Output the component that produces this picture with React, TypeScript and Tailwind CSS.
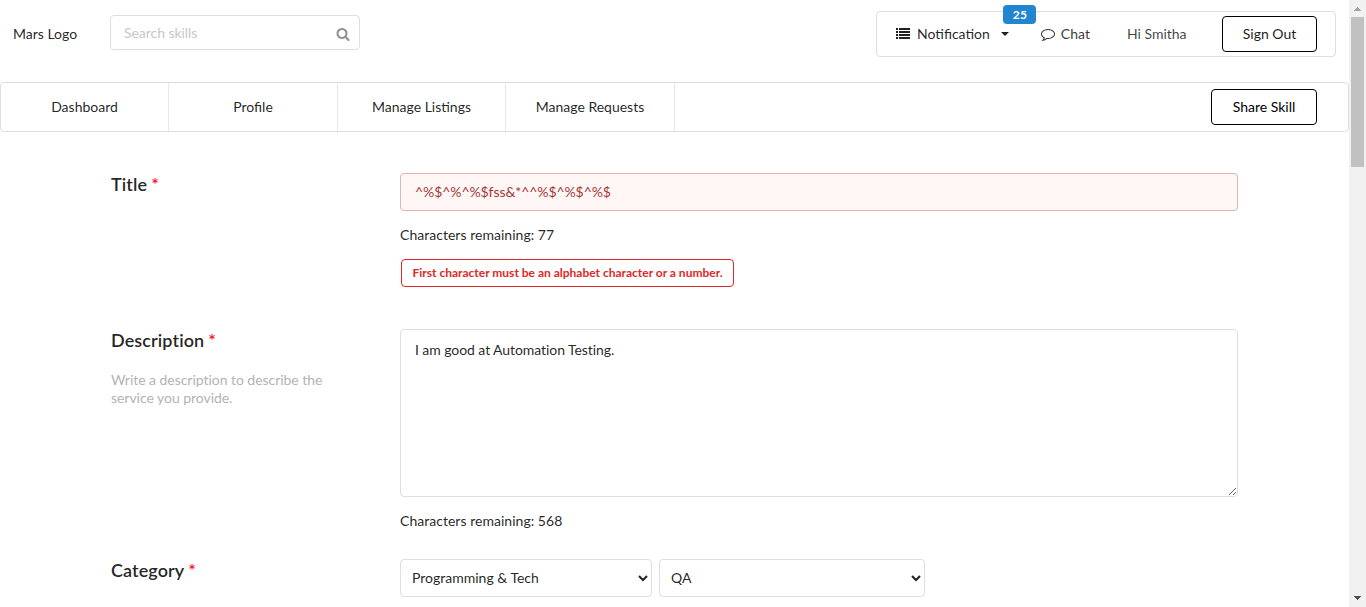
import React from 'react';

const NAV = ['Dashboard', 'Profile', 'Manage Listings', 'Manage Requests'];

function SearchIcon() {
  return (
    <svg viewBox="0 0 1792 1792" className="h-3.5 w-3.5" fill="currentColor">
      <path d="M1216 832q0-185-131.5-316.5t-316.5-131.5-316.5 131.5-131.5 316.5 131.5 316.5 316.5 131.5 316.5-131.5 131.5-316.5zm512 832q0 52-38 90t-90 38q-54 0-90-38l-343-342q-179 124-399 124-143 0-273.5-55.5t-225-150-150-225-55.5-273.5 55.5-273.5 150-225 225-150 273.5-55.5 273.5 55.5 225 150 150 225 55.5 273.5q0 220-124 399l343 343q37 37 37 90z" />
    </svg>
  );
}

function ListIcon() {
  return (
    <svg viewBox="0 0 14 11" className="h-[11px] w-3.5" fill="currentColor" shapeRendering="crispEdges">
      {[0, 3, 6, 9].map((y) => (
        <g key={y}>
          <rect x="0" y={y} width="2" height="2" />
          <rect x="3" y={y} width="11" height="2" />
        </g>
      ))}
    </svg>
  );
}

function CommentIcon() {
  return (
    <svg viewBox="0 0 1792 1792" className="h-3.5 w-3.5" fill="currentColor">
      <path d="M896 384q-204 0-381.5 69.5t-282 187.5-104.5 255q0 112 71.5 213.5t201.5 175.5l87 50-27 96q-24 91-70 172 152-63 275-171l43-38 57 6q69 8 130 8 204 0 381.5-69.5t282-187.5 104.5-255-104.5-255-282-187.5-381.5-69.5zm896 512q0 174-120 321.5t-326 233-450 85.5q-70 0-145-8-198 175-460 242-49 14-114 22h-5q-15 0-27-10.5t-16-27.5v-1q-3-4-.5-12t2-10 4.5-9.5l6-9 7-8.5 8-9q7-8 31-34.5t34.5-38 31-39.5 32.5-51 27-59 26-76q-157-89-247.5-220t-90.5-281q0-174 120-321.5t326-233 450-85.5 450 85.5 326 233 120 321.5z" />
    </svg>
  );
}

function Heading({ children }: { children: React.ReactNode }) {
  return (
    <h3 className="flex gap-1 text-[18px] leading-[22px] font-semibold tracking-[0.1px]">
      {children}
      <span className="font-semibold text-[#ff1030]">*</span>
    </h3>
  );
}

function Header() {
  return (
    <header className="flex h-[82px] items-start pr-[13px] pl-[13px]">
      <div className="mt-[25px] w-[97px] leading-[18px]">Mars Logo</div>
      <div className="mt-[15px] flex h-[35px] w-[250px] items-center rounded-[4px] border border-[#dedede] pr-[9px] pl-[13px]">
        <input
          placeholder="Search skills"
          className="min-w-0 flex-1 leading-[17px] tracking-[-0.05px] outline-none placeholder:text-[#c7c7c7]"
        />
        <span className="mt-[3px] text-[#909090]">
          <SearchIcon />
        </span>
      </div>
      <div className="mt-[11px] ml-auto flex h-[46px] w-[460px] items-center rounded-[4px] border border-[#dedede] pr-[18px] pl-[19px]">
        <div className="relative flex items-center">
          <span className="-mt-px">
            <ListIcon />
          </span>
          <span className="ml-[7px]">Notification</span>
          <svg viewBox="0 0 8 4" className="ml-[11px] h-1 w-2" fill="currentColor">
            <path d="M0 0h8L4 4z" />
          </svg>
          <span className="absolute -top-[20px] left-[107px] flex h-[19px] w-[33px] items-center justify-center rounded-[4px] bg-[#2185d0] pt-px pl-px text-[12px] leading-3 font-bold tracking-[0.3px] text-white">
            25
          </span>
        </div>
        <div className="ml-[32px] flex items-center text-black/80">
          <CommentIcon />
          <span className="ml-[6px]">Chat</span>
        </div>
        <div className="ml-[37px] text-black/75">Hi Smitha</div>
        <button className="ml-auto h-9 w-[95px] rounded-[4px] border border-black text-black/90">Sign Out</button>
      </div>
    </header>
  );
}

function Nav() {
  return (
    <nav className="flex h-[50px] items-center rounded-[4px] border border-[#dedede] pr-[31px]">
      {NAV.map((n) => (
        <a
          key={n}
          className="flex h-full w-[169px] items-center justify-center border-r border-[#e8e8e8] odd:w-[168px]"
        >
          {n}
        </a>
      ))}
      <button className="ml-auto h-9 w-[106px] rounded-[4px] border border-black text-black">Share Skill</button>
    </nav>
  );
}

function Scrollbar() {
  return (
    <div className="flex w-[17px] shrink-0 flex-col items-center bg-[#f1f1f1]">
      <svg viewBox="0 0 17 17" className="h-[17px] w-[17px]" fill="#a3a3a3" shapeRendering="crispEdges">
        <path d="M8 7h1v1h1v1h1v1h1v1H5v-1h1V9h1V8h1z" />
      </svg>
      <div className="h-[150px] w-[13px] bg-[#c1c1c1]" />
      <svg viewBox="0 0 17 17" className="mt-auto h-[17px] w-[17px]" fill="#505050" shapeRendering="crispEdges">
        <path d="M5 6h7v1h-1v1h-1v1H9v1H8V9H7V8H6V7H5z" />
      </svg>
    </div>
  );
}

export default function App() {
  return (
    <div className="flex h-[607px] w-[1366px] overflow-hidden bg-white font-['Lato',sans-serif] text-[14px] leading-[18px] text-black/87">
      <div className="w-[1349px]">
        <Header />
        <Nav />
        <main className="pt-[41px] pl-[111px]">
          <section className="flex h-[156px]">
            <div className="w-[289px]">
              <Heading>Title</Heading>
            </div>
            <div className="w-[838px]">
              <input
                defaultValue="^%$^%^%$fss&*^^%$^%$^%$"
                className="block h-[38px] w-full rounded-[4px] border border-[#e0b4b4] bg-[#fff6f6] px-[14px] pb-[2px] tracking-[-0.08px] text-[#9f3a38] outline-none"
              />
              <p className="mt-[15px] tracking-[0.03px]">Characters remaining: 77</p>
              <div className="mt-[15px] ml-px flex h-7 w-[333px] items-center justify-center rounded-[4px] border border-[#db2828] text-[12px] font-bold whitespace-nowrap text-[#db2828]">
                First character must be an alphabet character or a number.
              </div>
            </div>
          </section>
          <section className="flex h-[230px]">
            <div className="w-[289px]">
              <Heading>Description</Heading>
              <p className="mt-[20px] w-[230px] tracking-[-0.04px] text-[#b3b3b3]">
                Write a description to describe the service you provide.
              </p>
            </div>
            <div className="w-[838px]">
              <textarea
                defaultValue="I am good at Automation Testing."
                className="block h-[168px] w-full resize-y rounded-[4px] border border-[#dedede] px-[14px] py-[11px] tracking-[-0.07px] outline-none"
              />
              <p className="mt-[15px] tracking-[0.03px]">Characters remaining: 568</p>
            </div>
          </section>
          <section className="flex">
            <div className="w-[289px]">
              <Heading>Category</Heading>
            </div>
            <div className="flex gap-[7px]">
              <select className="h-[38px] w-[252px] rounded-[4px] border border-[#dedede] bg-white pr-2 pb-[2px] pl-[7px]">
                <option>Programming &amp; Tech</option>
              </select>
              <select className="h-[38px] w-[266px] rounded-[4px] border border-[#dedede] bg-white pr-2 pb-[2px] pl-[7px]">
                <option>QA</option>
              </select>
            </div>
          </section>
        </main>
      </div>
      <Scrollbar />
    </div>
  );
}
